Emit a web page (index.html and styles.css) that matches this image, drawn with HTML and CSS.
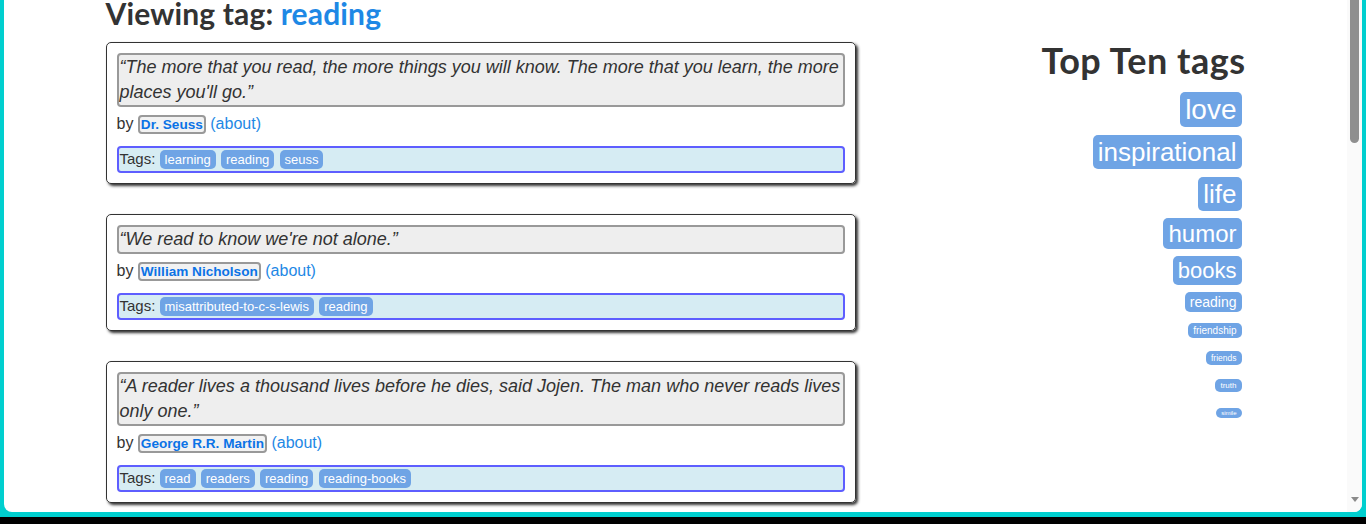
FILE: index.html
```html
<!DOCTYPE html>
<html lang="en">
<head>
<meta charset="utf-8">
<title>Quotes to Scrape</title>
<link rel="stylesheet" href="styles.css">
</head>
<body>
<div class="screen">
  <div class="window">
    <div class="page">
      <div class="container">
        <div class="col-main">
          <h3 class="view-title">Viewing tag: <a href="#" class="title-link">reading</a></h3>

          <div class="quote">
            <span class="text">“The more that you read, the more things you will know. The more that you learn, the more places you'll go.”</span>
            <span class="byline">by <small class="author">Dr. Seuss</small> <a href="#" class="about">(about)</a></span>
            <div class="tags">Tags: <a class="tag" href="#">learning</a> <a class="tag" href="#">reading</a> <a class="tag" href="#">seuss</a></div>
          </div>

          <div class="quote">
            <span class="text">“We read to know we're not alone.”</span>
            <span class="byline">by <small class="author">William Nicholson</small> <a href="#" class="about">(about)</a></span>
            <div class="tags">Tags: <a class="tag" href="#">misattributed-to-c-s-lewis</a> <a class="tag" href="#">reading</a></div>
          </div>

          <div class="quote">
            <span class="text">“A reader lives a thousand lives before he dies, said Jojen. The man who never reads lives only one.”</span>
            <span class="byline">by <small class="author">George R.R. Martin</small> <a href="#" class="about">(about)</a></span>
            <div class="tags">Tags: <a class="tag" href="#">read</a> <a class="tag" href="#">readers</a> <a class="tag" href="#">reading</a> <a class="tag" href="#">reading-books</a></div>
          </div>
        </div>

        <div class="col-side">
          <h2 class="side-title">Top Ten tags</h2>
          <span class="tag-item"><a class="cloud-tag" href="#" style="font-size: 28px">love</a></span>
          <span class="tag-item"><a class="cloud-tag" href="#" style="font-size: 26px">inspirational</a></span>
          <span class="tag-item"><a class="cloud-tag" href="#" style="font-size: 26px">life</a></span>
          <span class="tag-item"><a class="cloud-tag" href="#" style="font-size: 24px">humor</a></span>
          <span class="tag-item"><a class="cloud-tag" href="#" style="font-size: 22px">books</a></span>
          <span class="tag-item"><a class="cloud-tag" href="#" style="font-size: 14px">reading</a></span>
          <span class="tag-item"><a class="cloud-tag" href="#" style="font-size: 10px">friendship</a></span>
          <span class="tag-item"><a class="cloud-tag" href="#" style="font-size: 8.5px">friends</a></span>
          <span class="tag-item"><a class="cloud-tag" href="#" style="font-size: 8px">truth</a></span>
          <span class="tag-item"><a class="cloud-tag" href="#" style="font-size: 6px">simile</a></span>
        </div>
      </div>
    </div>
    <div class="scrollbar">
      <div class="thumb"></div>
      <div class="arrow"></div>
    </div>
  </div>
</div>
</body>
</html>
```

FILE: styles.css
```css
html, body {
  margin: 0;
  padding: 0;
}

body {
  background: #000;
  height: 524px;
  overflow: hidden;
  font-family: "Liberation Sans", Arial, sans-serif;
  font-size: 16px;
  line-height: 1.42857;
  color: #333;
}

a {
  color: #1e88e5;
  text-decoration: none;
}

.screen {
  height: 517px;
  box-sizing: border-box;
  background: #00cfcf;
  padding: 0 4px 5px 4px;
}

.window {
  height: 512px;
  background: #fff;
  border-radius: 0 0 8px 8px;
  overflow: hidden;
  display: flex;
}

.page {
  flex: 1;
  overflow: hidden;
}

.container {
  width: 1140px;
  margin: 0 auto;
  display: flex;
  align-items: flex-start;
}

.col-main {
  flex: 0 0 750px;
}

.view-title {
  font-family: "Lato", sans-serif;
  font-weight: 700;
  font-size: 30px;
  line-height: 27px;
  letter-spacing: 0.15px;
  margin: 0 0 15px 0;
  color: #333;
}

.title-link {
  color: #1e88e5;
}

.quote {
  border: 1px solid #333;
  border-radius: 5px;
  box-shadow: 2px 2px 3px #333;
  padding: 10px;
  margin-bottom: 30px;
}

.text {
  display: block;
  font-size: 18px;
  line-height: 25px;
  font-style: italic;
  background: #eee;
  border: 2px solid #999;
  border-radius: 4px;
  padding: 0 1px;
  margin-bottom: 6px;
}

.byline {
  display: block;
  margin-bottom: 10px;
}

.author {
  font-size: 85%;
  font-weight: 700;
  color: #0b73e6;
  background: #f2f2f2;
  border: 2px solid #999;
  border-radius: 4px;
  padding: 0 1px;
}

.tags {
  font-size: 15px;
  line-height: 22px;
  background: #d6ecf3;
  border: 2px solid #5e5eff;
  border-radius: 4px;
  padding: 0 1px;
}

.tag {
  font-size: 13px;
  color: #fff;
  background: #6fa4e5;
  border-radius: 5px;
  padding: 2px 5px;
  margin-right: 1px;
}

.col-side {
  flex: 1;
  margin-left: 45px;
  text-align: right;
}

.side-title {
  font-family: "Lato", sans-serif;
  font-weight: 700;
  font-size: 36px;
  line-height: 40px;
  letter-spacing: 0.5px;
  margin: 40px 0 10px 0;
  color: #333;
}

.tag-item {
  display: block;
  margin: 4.2px 4px;
}

.cloud-tag {
  color: #fff;
  background: #6fa4e5;
  border-radius: 5px;
  padding: 2px 5px;
}

.scrollbar {
  flex: 0 0 15px;
  background: #fafafa;
  display: flex;
  flex-direction: column;
  justify-content: space-between;
  align-items: center;
}

.thumb {
  width: 9px;
  height: 143px;
  background: #8f8f8f;
  border-radius: 0 0 5px 5px;
}

.arrow {
  width: 0;
  height: 0;
  border-left: 4px solid transparent;
  border-right: 4px solid transparent;
  border-top: 5px solid #8a8a8a;
  margin-bottom: 10px;
}
```
